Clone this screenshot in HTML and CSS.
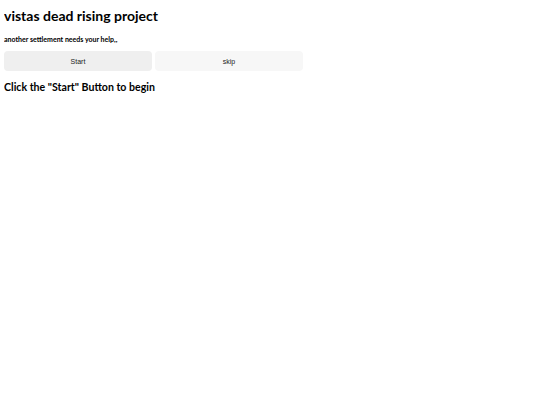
FILE: index.html
```html
<!DOCTYPE html>
<html>
<head>
<meta charset="utf-8">
<link rel="stylesheet" href="styles.css">
</head>
<body>
<h1 class="title">vistas dead rising project</h1>
<p class="subtitle">another settlement needs your help,,</p>
<div class="buttons">
  <button class="btn btn-start">Start</button>
  <button class="btn btn-skip">skip</button>
</div>
<h2 class="prompt">Click the "Start" Button to begin</h2>
</body>
</html>
```
FILE: styles.css
```css
html, body { background: #fff; }
body {
  margin: 4px;
  font-family: "Lato", "Noto Sans", sans-serif;
  color: #000;
}
.title {
  font-size: 14px;
  font-weight: 700;
  margin: 3px 0 0;
  line-height: 18px;
}
.subtitle {
  font-size: 7px;
  font-weight: 700;
  margin: 9px 0 0;
  line-height: 10px;
}
.buttons {
  display: flex;
  gap: 3px;
  margin-top: 7px;
}
.btn {
  width: 148px;
  height: 20px;
  border: none;
  border-radius: 4px;
  font-family: "Liberation Sans", Arial, sans-serif;
  font-size: 7px;
  color: #222;
  padding: 0;
}
.btn-start { background: #efefef; }
.btn-skip { background: #f7f7f7; }
.prompt {
  font-size: 10.6px;
  font-weight: 700;
  margin: 9px 0 0;
  line-height: 14px;
}
```
